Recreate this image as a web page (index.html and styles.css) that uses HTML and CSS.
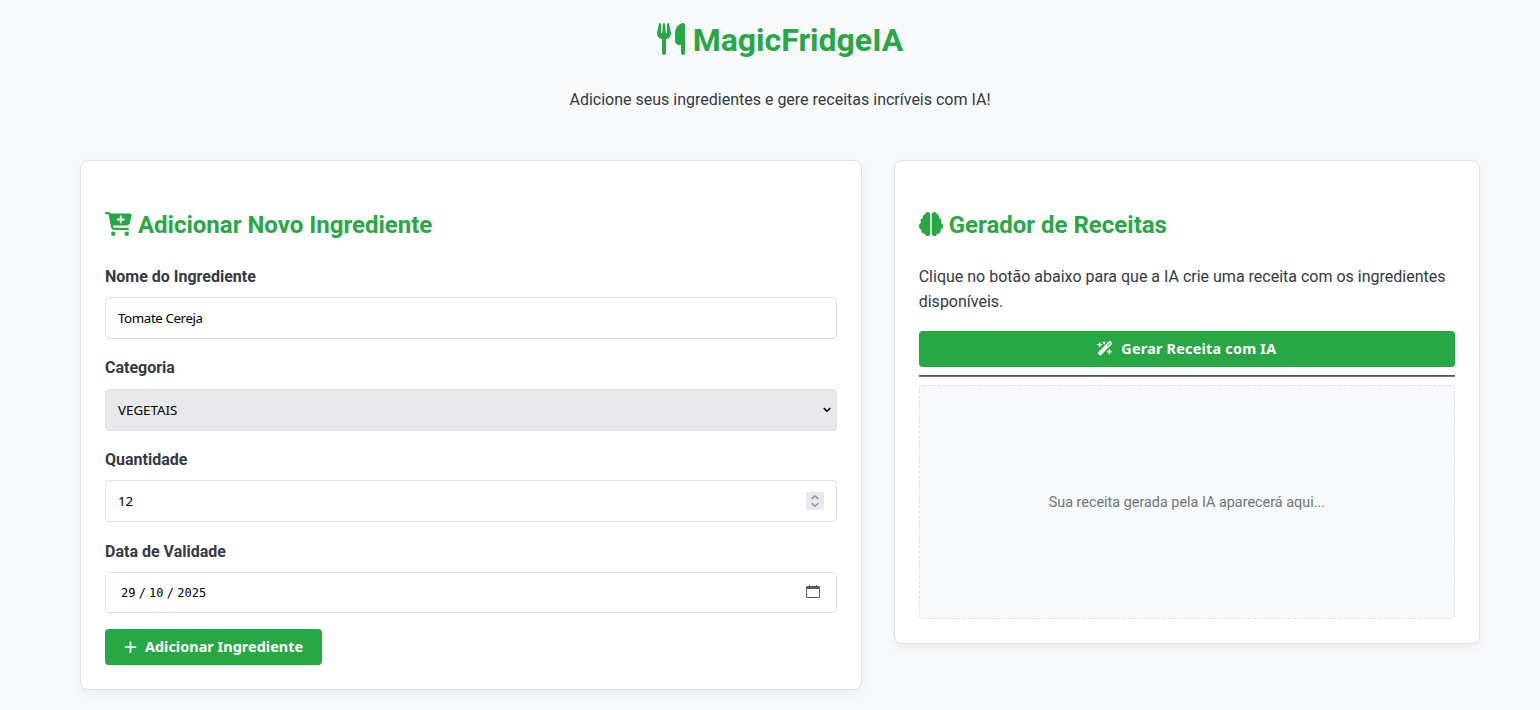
FILE: index.html
```html
<!DOCTYPE html>
<html lang="pt-BR">
<head>
<meta charset="utf-8">
<title>MagicFridgeIA</title>
<link rel="stylesheet" href="styles.css">
</head>
<body>
<div class="container">
  <header class="header">
    <h1><svg class="icon icon-utensils" viewBox="0 0 448 512"><path d="M416 0C400 0 288 32 288 176V288c0 35.3 28.7 64 64 64h32V480c0 17.7 14.3 32 32 32s32-14.3 32-32V352 240 32c0-17.7-14.3-32-32-32zM64 16C64 7.8 57.9 1 49.7 .1S34.2 4.6 32.4 12.5L2.1 148.8C.7 155.1 0 161.5 0 167.9c0 45.9 35.1 83.6 80 87.7V480c0 17.7 14.3 32 32 32s32-14.3 32-32V255.6c44.9-4.1 80-41.8 80-87.7c0-6.4-.7-12.8-2.1-19.1L191.6 12.5c-1.8-8-9.3-13.3-17.4-12.4S160 7.8 160 16V150.2c0 5.4-4.4 9.8-9.8 9.8c-5.1 0-9.3-3.9-9.8-9L127.9 14.6C127.2 6.3 120.3 0 112 0s-15.2 6.3-15.9 14.6L83.7 151c-.5 5.1-4.7 9-9.8 9c-5.4 0-9.8-4.4-9.8-9.8V16z"/></svg> MagicFridgeIA</h1>
    <p>Adicione seus ingredientes e gere receitas incríveis com IA!</p>
  </header>
  <main class="grid">
    <section class="card">
      <h2><svg class="icon icon-cart" viewBox="0 0 576 512"><path d="M0 24C0 10.7 10.7 0 24 0H69.5c22 0 41.5 12.8 50.6 32h411c26.3 0 45.5 25 38.6 50.4l-41 152.3c-8.5 31.4-37 53.3-69.5 53.3H170.7l5.4 28.5c2.2 11.3 12.1 19.5 23.6 19.5H488c13.3 0 24 10.7 24 24s-10.7 24-24 24H199.7c-34.6 0-64.3-24.6-70.7-58.5L77.4 54.5c-.7-3.8-4-6.5-7.9-6.5H24C10.7 48 0 37.3 0 24zM128 464a48 48 0 1 1 96 0 48 48 0 1 1 -96 0zm336-48a48 48 0 1 1 0 96 48 48 0 1 1 0-96zM252 160c0 11 9 20 20 20h44v44c0 11 9 20 20 20s20-9 20-20V180h44c11 0 20-9 20-20s-9-20-20-20H356V96c0-11-9-20-20-20s-20 9-20 20v44H272c-11 0-20 9-20 20z"/></svg> Adicionar Novo Ingrediente</h2>
      <div class="group">
        <div class="label">Nome do Ingrediente</div>
        <div class="field"><span class="name-value">Tomate Cereja</span></div>
      </div>
      <div class="group">
        <div class="label">Categoria</div>
        <div class="field select"><span class="select-value">VEGETAIS</span><svg class="chevron" viewBox="0 0 8 6"><path d="M.8 1.1 4 4.3 7.2 1.1"/></svg></div>
      </div>
      <div class="group">
        <div class="label">Quantidade</div>
        <div class="field"><span>12</span><svg class="spinner" viewBox="0 0 18 18"><path d="M5.7 6.9 9 3.9l3.3 3M5.7 11.3l3.3 3 3.3-3"/></svg></div>
      </div>
      <div class="group">
        <div class="label label-date">Data de Validade</div>
        <div class="field date"><span class="date-value">29 / 10 / 2025</span><svg class="calendar" viewBox="0 0 14 13"><path d="M1.2 1h11.6q1.2 0 1.2 1.2v9.6q0 1.2-1.2 1.2H1.2Q0 13 0 11.8V2.2Q0 1 1.2 1zM1 4v7.5q0 .5.5.5h11q.5 0 .5-.5V4z" fill-rule="evenodd"/><path d="M3 0h1v1H3zM10 0h1v1h-1z"/></svg></div>
      </div>
      <button class="btn btn-add" type="button"><svg class="icon icon-plus" viewBox="0 0 448 512"><path d="M256 80c0-17.7-14.3-32-32-32s-32 14.3-32 32V224H48c-17.7 0-32 14.3-32 32s14.3 32 32 32H192V432c0 17.7 14.3 32 32 32s32-14.3 32-32V288H400c17.7 0 32-14.3 32-32s-14.3-32-32-32H256V80z"/></svg><span>Adicionar Ingrediente</span></button>
    </section>
    <section class="card">
      <h2><svg class="icon icon-brain" viewBox="0 0 512 512"><path d="M184 0c30.9 0 56 25.1 56 56V456c0 30.9-25.1 56-56 56c-28.9 0-52.7-21.9-55.7-50.1c-5.2 1.4-10.7 2.1-16.3 2.1c-35.3 0-64-28.7-64-64c0-7.4 1.3-14.6 3.6-21.2C21.4 367.4 0 338.2 0 304c0-31.9 18.7-59.5 45.8-72.3C37.1 220.8 32 207 32 192c0-30.7 21.6-56.3 50.4-62.6C80.8 123.9 80 118 80 112c0-29.9 20.6-55.1 48.3-62.1C131.3 21.9 155.1 0 184 0zM328 0c28.9 0 52.6 21.9 55.7 49.9c27.8 7 48.3 32.1 48.3 62.1c0 6-.8 11.9-2.4 17.4c28.8 6.2 50.4 31.9 50.4 62.6c0 15-5.1 28.8-13.8 39.7C493.3 244.5 512 272.1 512 304c0 34.2-21.4 63.4-51.6 74.8c2.3 6.6 3.6 13.8 3.6 21.2c0 35.3-28.7 64-64 64c-5.6 0-11.1-.7-16.3-2.1c-3 28.2-26.8 50.1-55.7 50.1c-30.9 0-56-25.1-56-56V56c0-30.9 25.1-56 56-56z"/></svg> Gerador de Receitas</h2>
      <p class="intro">Clique no botão abaixo para que a IA crie uma receita com os ingredientes disponíveis.</p>
      <button class="btn btn-wide" type="button"><svg class="icon icon-wand" viewBox="0 0 576 512"><path d="M234.7 42.7L197 56.8c-3 1.1-5 4-5 7.2s2 6.1 5 7.2l37.7 14.1L248.8 123c1.1 3 4 5 7.2 5s6.1-2 7.2-5l14.1-37.7L315 71.2c3-1.1 5-4 5-7.2s-2-6.1-5-7.2L277.3 42.7 263.2 5c-1.1-3-4-5-7.2-5s-6.1 2-7.2 5L234.7 42.7zM46.1 395.4c-18.7 18.7-18.7 49.1 0 67.9l34.6 34.6c18.7 18.7 49.1 18.7 67.9 0L529.9 116.5c18.7-18.7 18.7-49.1 0-67.9L495.3 14.1c-18.7-18.7-49.1-18.7-67.9 0L46.1 395.4zM484.6 82.6l-105 105-23.3-23.3 105-105 23.3 23.3zM7.5 117.2C3 118.9 0 123.2 0 128s3 9.1 7.5 10.8L64 160l21.2 56.5c1.7 4.5 6 7.5 10.8 7.5s9.1-3 10.8-7.5L128 160l56.5-21.2c4.5-1.7 7.5-6 7.5-10.8s-3-9.1-7.5-10.8L128 96 106.8 39.5C105.1 35 100.8 32 96 32s-9.1 3-10.8 7.5L64 96 7.5 117.2zm352 256c-4.5 1.7-7.5 6-7.5 10.8s3 9.1 7.5 10.8L416 416l21.2 56.5c1.7 4.5 6 7.5 10.8 7.5s9.1-3 10.8-7.5L480 416l56.5-21.2c4.5-1.7 7.5-6 7.5-10.8s-3-9.1-7.5-10.8L480 352l-21.2-56.5c-1.7-4.5-6-7.5-10.8-7.5s-9.1 3-10.8 7.5L416 352l-56.5 21.2z"/></svg><span>Gerar Receita com IA</span></button>
      <div class="divider"></div>
      <div class="result">Sua receita gerada pela IA aparecerá aqui...</div>
    </section>
  </main>
</div>
</body>
</html>
```
FILE: styles.css
```css
* { box-sizing: border-box; }
html { overflow: hidden; }
body {
  margin: 0;
  background: #f8f9fb;
  color: #343a40;
  font: 16px/1.6 Roboto, sans-serif;
}
.container { width: 1400px; margin-left: 80px; padding-top: 14.9px; }
.header { text-align: center; margin-bottom: 47.6px; }
h1, h2 { color: #28a745; font-weight: 700; }
h1 { font-size: 32px; margin: 0 0 20.9px; }
.header p { margin: 0; }
h2 { font-size: 24px; margin: 20.4px 0 19.5px; }
.icon { height: 1em; fill: currentColor; display: inline-block; vertical-align: -0.125em; }
.icon-utensils { width: 28px; }
.icon-cart { width: 27px; }
.icon-brain { width: 24px; }
.grid { display: grid; grid-template-columns: 4fr 3fr; gap: 32px; align-items: start; padding-bottom: 24px; }
.card {
  background: #fff;
  border: 1px solid #dee2e6;
  border-radius: 8px;
  padding: 24px;
  display: flow-root;
  box-shadow: 0 4px 8px rgba(0, 0, 0, .05);
}
.group { margin-bottom: 16px; }
.label { font-weight: 700; padding-top: .3px; margin-bottom: 7.7px; }
.label-date { padding-top: .8px; margin-bottom: 7.2px; }
.field {
  height: 42px;
  border: 1px solid #dee2e6;
  border-radius: 4px;
  padding: 0 12px;
  display: flex;
  align-items: center;
  justify-content: space-between;
  color: #000;
  font: 13.33px "Noto Sans", sans-serif;
}
.name-value { letter-spacing: -.4px; }
.select { background: #e9e9ed; padding-right: 5px; }
.chevron { width: 8px; height: 6px; fill: none; stroke: #000; stroke-width: 1.5; }
.spinner { width: 18px; height: 18px; background: #e9e9ed; fill: none; stroke: #8f8f9d; stroke-width: 1.5; }
.date { height: 41px; padding: 0 16px 0 15px; }
.date-value { font: 12px "DejaVu Sans Mono", monospace; word-spacing: -4px; padding-top: 1px; }
.calendar { width: 14px; height: 13px; margin-bottom: 2px; fill: #5b5b5b; }
.btn {
  height: 36px;
  border: 0;
  border-radius: 4px;
  background: #28a745;
  color: #fff;
  display: flex;
  align-items: center;
  justify-content: center;
  gap: 8px;
  padding: 0 19px;
  font: 700 14.4px "Noto Sans", sans-serif;
}
.btn-add { width: 217px; padding: 0; letter-spacing: .05px; }
.btn-wide { width: 100%; letter-spacing: .22px; }
.icon-plus { width: 13px; }
.icon-wand { width: 16px; }
.intro { margin: 0 0 15.7px; padding-top: .3px; }
.divider { height: 2px; margin: 8px 0; background: linear-gradient(#555 50%, #777 50%); }
.result {
  height: 234px;
  border: 1px dashed #dee2e6;
  border-radius: 4px;
  background: #f8f9fb;
  display: flex;
  align-items: center;
  justify-content: center;
  padding-top: 2px;
  color: #6c757d;
  font-size: 14.4px;
}
```
